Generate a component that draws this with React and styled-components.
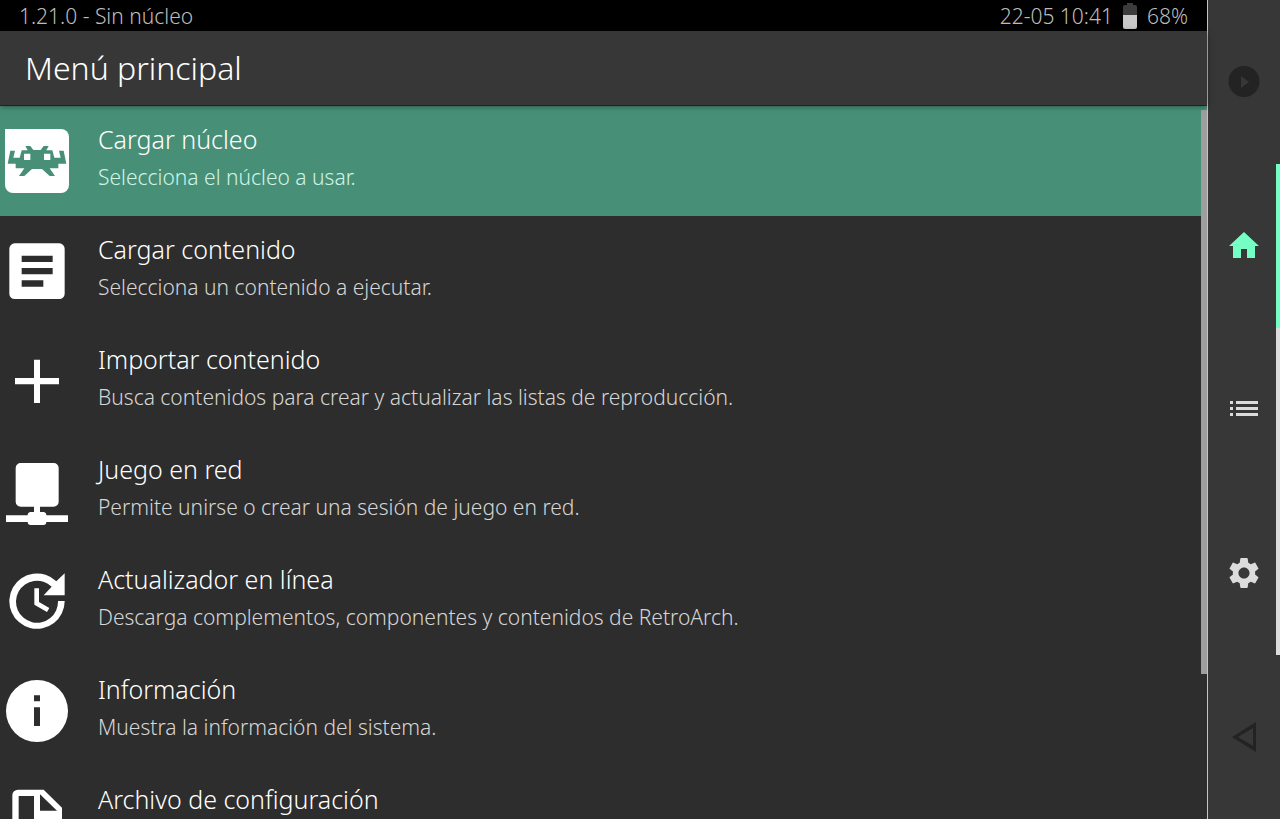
import React from 'react';
import styled, { createGlobalStyle } from 'styled-components';

const GlobalStyle = createGlobalStyle`
  * {
    box-sizing: border-box;
  }
  body {
    margin: 0;
    background: #2d2d2d;
    font-family: "Noto Sans", "Open Sans", sans-serif;
    font-weight: 300;
  }
  button {
    font: inherit;
    border: 0;
    padding: 0;
    cursor: pointer;
  }
`;

const Screen = styled.div`
  display: flex;
  height: 100vh;
  overflow: hidden;
`;

const Main = styled.main`
  flex: 1;
  min-width: 0;
  display: flex;
  flex-direction: column;
`;

const StatusBar = styled.div`
  display: flex;
  flex: none;
  align-items: center;
  justify-content: space-between;
  height: 31px;
  padding: 0 19px;
  background: #000;
  color: #bdbdbd;
  font-size: 21px;
  line-height: 30px;
`;

const StatusGroup = styled.div`
  display: flex;
  align-items: center;
  gap: 10px;
`;

const Header = styled.header`
  flex: none;
  height: 74px;
  padding: 0 25px;
  background: #373737;
  position: relative;
  z-index: 1;
  box-shadow: 0 1px 6px rgba(0, 0, 0, 0.5);
`;

const Title = styled.h1`
  margin: 0;
  color: #fff;
  font-size: 32px;
  font-weight: 300;
  line-height: 74px;
`;

const ListArea = styled.div`
  position: relative;
  flex: 1;
  min-height: 0;
  overflow: hidden;
`;

const List = styled.ul`
  margin: 0;
  padding: 1px 0 0;
  list-style: none;
`;

const Row = styled.button`
  display: flex;
  align-items: center;
  gap: 24px;
  width: 100%;
  height: 110px;
  text-align: left;
  color: #fff;
  background: ${props => (props.$active ? '#488f78' : 'transparent')};
`;

const RowIcon = styled.svg`
  flex: none;
  width: 74px;
  height: 74px;
  fill: #fff;
`;

const RowText = styled.span`
  display: flex;
  flex-direction: column;
  align-self: flex-start;
  padding-top: 14px;
`;

const RowTitle = styled.span`
  font-size: 25px;
  line-height: 38px;
`;

const RowSub = styled.span`
  font-size: 21px;
  line-height: 38px;
  color: ${props => (props.$active ? '#cff5e6' : '#d6d6d6')};
`;

const ScrollThumb = styled.div`
  position: absolute;
  top: 5px;
  right: 0;
  width: 6px;
  height: 79%;
  background: #9e9e9e;
`;

const Sidebar = styled.nav`
  display: flex;
  flex-direction: column;
  flex: none;
  width: 73px;
  border-left: 1px solid #c4c4c4;
  background: #373737;
`;

const Tab = styled.button`
  flex: 1;
  display: flex;
  align-items: center;
  justify-content: center;
  border-right: 4px solid ${props => props.$edge || 'transparent'};
  background: none;
  color: ${props => props.$color};
`;

const TabIcon = styled.svg`
  width: 32px;
  height: 32px;
  margin-left: 3px;
  fill: currentColor;
`;

const rows = [
  {
    title: 'Cargar núcleo',
    sub: 'Selecciona el núcleo a usar.',
    viewBox: '0 369 222 222',
    active: true,
    icon: (
      <>
        <path d="M15 384H183a24 24 0 0 1 24 24V552a24 24 0 0 1-24 24H39a24 24 0 0 1-24-24Z" />
        <path
          fill="#488f78"
          fillRule="evenodd"
          d="M31 449H45L40 470H59L65 448H83L76 435H91L100 447H122L131 435H146L139 448H157L163 470H182L177 449H191L199 488H175V502H149L165 525H149L126 504H96L73 525H57L73 502H47V488H23ZM72 458V477H91V458ZM132 458V477H151V458Z"
        />
      </>
    ),
  },
  {
    title: 'Cargar contenido',
    sub: 'Selecciona un contenido a ejecutar.',
    viewBox: '0 9 222 222',
    icon: (
      <path
        fillRule="evenodd"
        d="M44 37H178a16 16 0 0 1 16 16V188a16 16 0 0 1-16 16H44a16 16 0 0 1-16-16V53a16 16 0 0 1 16-16ZM65 74V93H158V74ZM65 111V130H158V111ZM65 148V167H130V148Z"
      />
    ),
  },
  {
    title: 'Importar contenido',
    sub: 'Busca contenidos para crear y actualizar las listas de reproducción.',
    viewBox: '0 340 222 222',
    icon: <path d="M102 387H120V442H177V461H120V517H102V461H45V442H102Z" />,
  },
  {
    title: 'Juego en red',
    sub: 'Permite unirse o crear una sesión de juego en red.',
    viewBox: '0 12 222 222',
    icon: (
      <path d="M62 39H161a15 15 0 0 1 15 15V155a15 15 0 0 1-15 15H120V186H130a9 9 0 0 1 9 10H204V216H139a9 9 0 0 1-9 9H92a9 9 0 0 1-9-9H18V196H83a9 9 0 0 1 9-10H102V170H62a15 15 0 0 1-15-15V54a15 15 0 0 1 15-15Z" />
    ),
  },
  {
    title: 'Actualizador en línea',
    sub: 'Descarga complementos, componentes y contenidos de RetroArch.',
    viewBox: '0 344 222 222',
    icon: (
      <>
        <path d="M194 372V438H131L155 412A63 63 0 1 0 174 455H194A83 83 0 1 1 169 396Z" />
        <path d="M103 417H117V458L148 476L141 488L103 466Z" />
      </>
    ),
  },
  {
    title: 'Información',
    sub: 'Muestra la información del sistema.',
    viewBox: '0 15 222 222',
    icon: (
      <path
        fillRule="evenodd"
        d="M111 33a93 93 0 1 1 0 186a93 93 0 1 1 0-186ZM102 79V97H120V79ZM102 115V171H120V115Z"
      />
    ),
  },
  {
    title: 'Archivo de configuración',
    viewBox: '0 346 222 222',
    icon: (
      <path
        fillRule="evenodd"
        d="M54 363H131L186 417V532a17 17 0 0 1-17 17H54a17 17 0 0 1-17-17V380a17 17 0 0 1 17-17ZM56 382V530H102V382ZM120 377V426H171Z"
      />
    ),
  },
];

const tabs = [
  {
    label: 'Reanudar',
    color: '#232323',
    icon: (
      <path
        fillRule="evenodd"
        d="M16 0a15.500 15.500 0 1 1 0 31a15.500 15.500 0 1 1 0-31ZM13 10V22L21 16Z"
      />
    ),
  },
  {
    label: 'Menú principal',
    color: '#75ffc5',
    edge: '#75ffc5',
    icon: <path d="M16 2L31 16H27V28H19V19H13V28H5V16H1Z" />,
  },
  {
    label: 'Listas de reproducción',
    color: '#dcdcdc',
    edge: '#dcdcdc',
    icon: <path d="M2 8H5V11H2ZM8 8H30V11H8ZM2 14H5V17H2ZM8 14H30V17H8ZM2 20H5V23H2ZM8 20H30V23H8Z" />,
  },
  {
    label: 'Ajustes',
    color: '#dcdcdc',
    edge: '#dcdcdc',
    icon: (
      <path
        transform="translate(-2.600 -2.600) scale(1.550)"
        d="M19.140 12.940c.04-.3.06-.61.06-.94 0-.32-.02-.64-.07-.94l2.030-1.580c.18-.14.23-.41.12-.61l-1.920-3.320c-.12-.22-.37-.29-.59-.22l-2.390.96c-.5-.38-1.030-.7-1.620-.94l-.36-2.540c-.04-.24-.24-.41-.48-.41h-3.840c-.24 0-.43.17-.47.41l-.36 2.540c-.59.24-1.130.57-1.620.94l-2.390-.96c-.22-.08-.47 0-.59.22L2.740 8.870c-.12.21-.08.47.12.61l2.030 1.580c-.05.3-.09.63-.09.94s.02.64.07.94l-2.030 1.580c-.18.14-.23.41-.12.61l1.920 3.320c.12.22.37.29.59.22l2.390-.96c.5.38 1.030.7 1.620.94l.36 2.540c.05.24.24.41.48.41h3.840c.24 0 .44-.17.47-.41l.36-2.540c.59-.24 1.130-.56 1.620-.94l2.390.96c.22.08.47 0 .59-.22l1.920-3.320c.12-.22.07-.47-.12-.61l-2.010-1.580zM12 15.600c-1.980 0-3.600-1.620-3.600-3.600s1.620-3.600 3.600-3.600 3.600 1.620 3.600 3.600-1.620 3.600-3.600 3.600z"
      />
    ),
  },
  {
    label: 'Atrás',
    color: '#232323',
    icon: <path fillRule="evenodd" d="M28 1V31L4 16ZM25 7L10 16L25 25Z" />,
  },
];

function App() {
  return (
    <Screen>
      <GlobalStyle />
      <Main>
        <StatusBar>
          <span>1.21.0 - Sin núcleo</span>
          <StatusGroup>
            <span>22-05 10:41</span>
            <svg width="14" height="26" viewBox="0 0 14 26">
              <path fill="#3c3c3c" d="M4 0H10V2H12a2 2 0 0 1 2 2V12H0V4a2 2 0 0 1 2-2H4Z" />
              <path fill="#c9c9c9" d="M0 12H14V24a2 2 0 0 1-2 2H2a2 2 0 0 1-2-2Z" />
            </svg>
            <span>68%</span>
          </StatusGroup>
        </StatusBar>
        <Header>
          <Title>Menú principal</Title>
        </Header>
        <ListArea>
          <List>
            {rows.map(row => (
              <li key={row.title}>
                <Row $active={row.active}>
                  <RowIcon viewBox={row.viewBox}>{row.icon}</RowIcon>
                  <RowText>
                    <RowTitle>{row.title}</RowTitle>
                    {row.sub && <RowSub $active={row.active}>{row.sub}</RowSub>}
                  </RowText>
                </Row>
              </li>
            ))}
          </List>
          <ScrollThumb />
        </ListArea>
      </Main>
      <Sidebar>
        {tabs.map(tab => (
          <Tab key={tab.label} aria-label={tab.label} $color={tab.color} $edge={tab.edge}>
            <TabIcon viewBox="0 0 32 32">{tab.icon}</TabIcon>
          </Tab>
        ))}
      </Sidebar>
    </Screen>
  );
}

export default App;
